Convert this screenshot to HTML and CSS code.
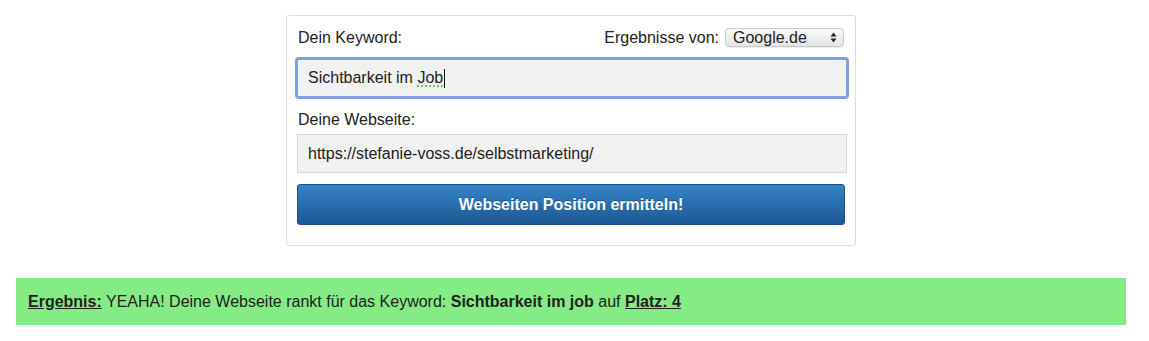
FILE: index.html
```html
<!DOCTYPE html>
<html lang="de">
<head>
<meta charset="utf-8">
<title>Webseiten Position</title>
<link rel="stylesheet" href="styles.css">
</head>
<body>
<div class="wrap">
  <form class="card">
    <div class="row-top">
      <label class="label">Dein Keyword:</label>
      <div class="engine">
        <span class="engine-label">Ergebnisse von:</span>
        <div class="select">
          <span class="select-text">Google.de</span>
          <svg class="select-arrows" width="7" height="11" viewBox="0 0 7 11"><path d="M3.5 0.5 L6.5 4.5 L0.5 4.5 Z M3.5 10.5 L6.5 6.5 L0.5 6.5 Z" fill="#222"/></svg>
        </div>
      </div>
    </div>
    <div class="field field-focus"><span class="field-text">Sichtbarkeit im <span class="spell">Job</span><span class="caret"></span></span></div>
    <label class="label label-site">Deine Webseite:</label>
    <div class="field"><span class="field-text">https://stefanie-voss.de/selbstmarketing/</span></div>
    <button type="button" class="btn">Webseiten Position ermitteln!</button>
  </form>
  <div class="result">
    <span><strong class="u">Ergebnis:</strong> YEAHA! Deine Webseite rankt für das Keyword: <strong>Sichtbarkeit im job</strong> auf <strong class="u">Platz: 4</strong></span>
  </div>
</div>
</body>
</html>
```

FILE: styles.css
```css
* { box-sizing: border-box; }
html, body { margin: 0; padding: 0; background: #fff; }
body {
  font-family: "Liberation Sans", Arial, sans-serif;
  font-size: 16px;
  color: #222;
}
.wrap {
  margin-left: 16px;
  width: 1110px;
  padding-top: 15px;
}
.card {
  width: 570px;
  margin: 0 auto;
  border: 1px solid #dcdcdc;
  border-radius: 3px;
  padding: 12px 8px 20px 10px;
  display: flex;
  flex-direction: column;
}
.row-top {
  display: flex;
  justify-content: space-between;
  align-items: center;
  height: 19px;
  margin-right: 3px;
}
.label {
  display: block;
  line-height: 18px;
  padding-left: 1px;
}
.engine {
  display: flex;
  align-items: center;
  gap: 6px;
}
.select {
  width: 119px;
  height: 19px;
  border: 1px solid #c9c9c9;
  border-radius: 4px;
  background: linear-gradient(#fafafa, #e4e4e4);
  display: flex;
  align-items: center;
  justify-content: space-between;
  padding: 0 6px 0 7px;
  box-shadow: 0 1px 1px rgba(0,0,0,0.08);
}
.select-text { line-height: 17px; }
.field {
  height: 39px;
  background: #f1f1f1;
  border: 1px solid #d6d6d6;
  padding: 0 10px;
  display: flex;
  align-items: center;
  width: 550px;
}
.field-text {
  display: inline-flex;
  align-items: center;
  white-space: pre;
}
.field-focus {
  margin-top: 12px;
  height: 38px;
  border: 1px solid #7e9fe2;
  border-radius: 2px;
  box-shadow: 0 0 0 2px #7e9fe2;
}
.spell {
  text-decoration: underline dotted #4cbb4c;
  text-underline-offset: 3px;
}
.caret {
  display: inline-block;
  width: 1px;
  height: 19px;
  background: #111;
  margin-left: 1px;
}
.label-site {
  margin-top: 14px;
  margin-bottom: 5px;
}
.btn {
  margin-top: 11px;
  width: 548px;
  height: 41px;
  border: 1px solid #1d4f86;
  border-radius: 3px;
  background: linear-gradient(#3584c7, #1b5894);
  color: #fff;
  font-family: "Liberation Sans", Arial, sans-serif;
  font-size: 16px;
  font-weight: bold;
  text-shadow: 0 -1px 0 rgba(0,0,0,0.25);
  cursor: pointer;
  padding: 0;
}
.result {
  margin-top: 32px;
  height: 47px;
  background: #85ec85;
  padding: 0 12px;
  display: flex;
  align-items: center;
  white-space: pre;
}
.result strong { font-weight: bold; }
.u { text-decoration: underline; }
```
